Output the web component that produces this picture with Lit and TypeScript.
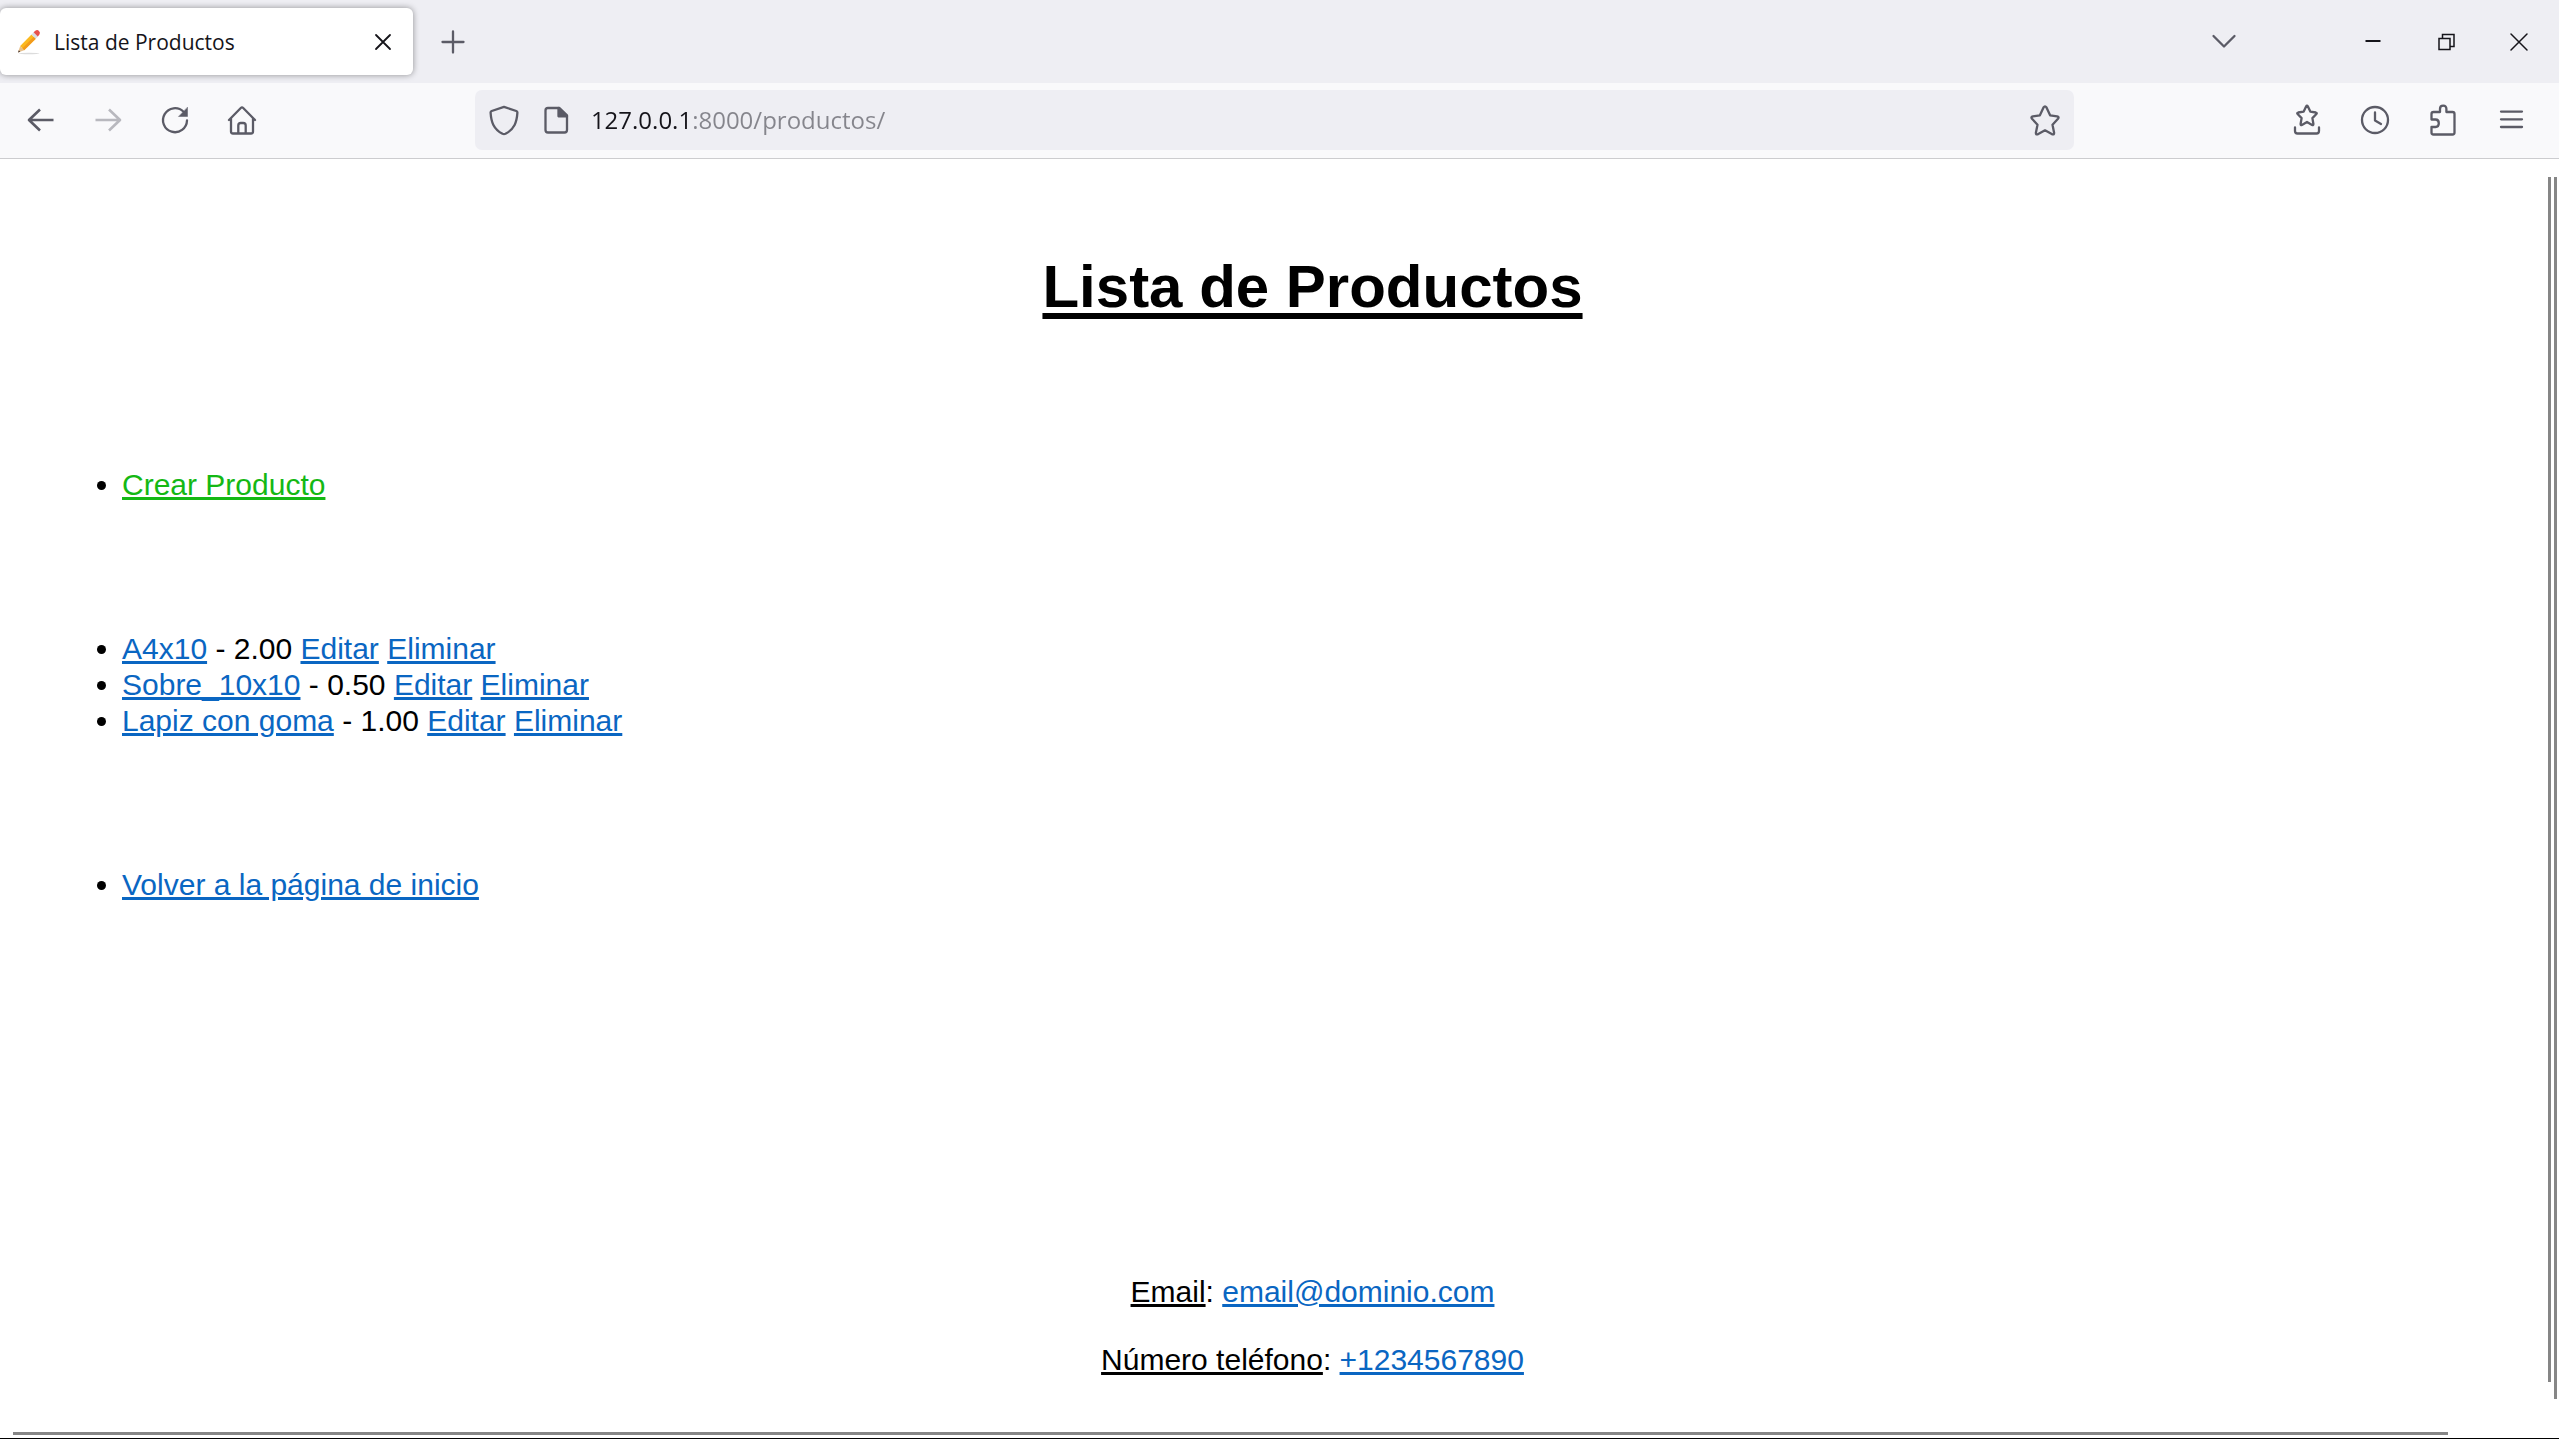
import { LitElement, html, css, svg } from "lit";
import { customElement, property } from "lit/decorators.js";

const glyphs = {
  back: svg`<path d="M28.500 16H4M15 5.500L4 16l11 10.500" stroke-width="2.600" stroke-linecap="butt"/>`,
  forward: svg`<path d="M3.500 16H28M17 5.500L28 16 17 26.500" stroke-width="2.600" stroke-linecap="butt"/>`,
  reload: svg`<path d="M28 16.500a12 12 0 1 1-3.500-8.800"/><path d="M28.500 3.500v9h-8.700z" fill="currentColor" stroke-width="0.500"/>`,
  home: svg`<path d="M3 16L14.800 4q1.200-1.200 2.400 0L29 16M5 14.500v13q0 2 2 2h18q2 0 2-2v-13M12.300 29V21.500q0-2.500 2.500-2.500h2.400q2.500 0 2.500 2.500V29"/>`,
  shield: svg`<path d="M16 2.800L28.300 7q1.200.500 1.100 1.700C28.800 18 26.500 25 17.500 29.800q-1.500.700-3 0C5.500 25 3.200 18 2.600 8.700 2.500 7.500 3 7.300 3.700 7z"/>`,
  page: svg`<path d="M8 4h11.500L27 11.300V26q0 2.500-2.500 2.500H8Q5.500 28.500 5.500 26V6.500Q5.500 4 8 4z"/><path d="M18.500 4v8.300H27z" fill="currentColor"/>`,
  star: svg`<path d="M14.500 3.500q1.500-2.200 3 0l3.600 7.800 7 1.100q2.300.600.900 2.300l-5.500 6 1.600 8q.200 2.300-1.900 1.600L16 26.300l-7.200 4q-2.100.700-1.900-1.600l1.600-8-5.500-6q-1.400-1.700.900-2.300l7-1.100z"/>`,
  bookmarks: svg`<path d="M15.200 2.300q.8-1.500 1.600 0l2.500 5.300 5.500.900q1.600.400.600 1.500l-4 4.100 1 5.900q0 1.500-1.300.900L16 18l-5.100 2.900q-1.300.600-1.300-.900l1-5.900-4-4.100q-1-1.100.600-1.500l5.500-.900zM4 23.500v3.500q0 2.500 2.500 2.500h19q2.500 0 2.500-2.500v-3.500"/>`,
  history: svg`<circle cx="16" cy="16" r="13"/><path d="M16 8.500V16.500l6 3.500"/>`,
  extensions: svg`<path d="M4.500 12V10q0-2 2-2H13V5q0-3.300 3.200-3.300T19.400 5v3H25.500q2 0 2 2v18.500q0 2-2 2h-19q-2 0-2-2V23H8.500q3.300 0 3.300-3.700T8.500 15.500H4.500z"/>`,
  menu: svg`<path d="M6 7.600h21M6 15.300h21M6 23h21"/>`,
  chevron: svg`<path d="M5.500 10L16 20.500 26.500 10"/>`,
  plus: svg`<path d="M16 5.500v21M5.500 16h21"/>`,
  closeTab: svg`<path d="M9 9l14 14M23 9L9 23" stroke-width="1.800"/>`,
  minimize: svg`<path d="M8.500 15h15" stroke-width="2" stroke-linecap="butt"/>`,
  restore: svg`<path d="M9 12.500h11v11H9zM12.500 12V8.500H24v12h-3.500" stroke-width="1.500" stroke-linejoin="miter"/>`,
  closeWindow: svg`<path d="M8 8l16 16M24 8L8 24" stroke-width="1.500"/>`,
};

type GlyphName = keyof typeof glyphs;

@customElement("ui-glyph")
export class UiGlyph extends LitElement {
  @property() name: GlyphName = "menu";

  static styles = css`
    :host { display: block; width: 32px; height: 32px; }
    .glyph {
      display: block;
      width: 32px;
      height: 32px;
      fill: none;
      stroke: currentColor;
      stroke-width: 2.3;
      stroke-linecap: round;
      stroke-linejoin: round;
    }
  `;

  render() {
    return html`<svg class="glyph" viewBox="0 0 32 32" aria-hidden="true">${glyphs[this.name]}</svg>`;
  }
}

@customElement("browser-chrome")
export class BrowserChrome extends LitElement {
  static styles = css`
    :host {
      display: block;
      color: #5b5b66;
      font-family: "Open Sans", "Noto Sans", sans-serif;
    }
    button {
      display: grid;
      place-items: center;
      flex: none;
      margin: 0;
      padding: 0;
      border: 0;
      background: none;
      color: inherit;
    }
    .tabs {
      display: flex;
      align-items: center;
      height: 83px;
      background: #eeeef3;
    }
    .tab {
      display: flex;
      align-items: center;
      box-sizing: border-box;
      width: 413px;
      height: 67px;
      padding: 0 14px 0 17px;
      border-radius: 6px;
      background: #ffffff;
      box-shadow: 0 0 6px rgba(0, 0, 0, 0.4);
      color: #15141a;
    }
    .favicon { flex: none; width: 24px; height: 26px; margin-right: 13px; }
    .title { flex: 1; font-size: 21px; line-height: 32px; white-space: nowrap; }
    .new-tab { width: 56px; height: 56px; margin-left: 12px; }
    .spacer { flex: 1; }
    .list-tabs { width: 56px; height: 56px; margin-right: 84px; }
    .window { display: flex; padding-right: 4px; color: #15141a; }
    .window button { width: 73px; height: 56px; }
    .toolbar {
      display: flex;
      align-items: center;
      height: 74px;
      padding: 0 20px 1px 13px;
      border-bottom: 1px solid #cccccf;
      background: #f9f9fb;
    }
    .group { display: flex; }
    .group button { width: 56px; height: 56px; }
    .group button:disabled { color: #b8b8be; }
    .navigation { gap: 11px; }
    .tools { gap: 12px; }
    .spring { flex: 205 1 0; }
    .address {
      display: flex;
      align-items: center;
      flex: 1600 1 0;
      height: 60px;
      border-radius: 7px;
      background: #eeeef3;
    }
    .address button { width: 32px; height: 56px; }
    .site { margin-left: 13px; margin-right: 7px; }
    .site + .site { margin-right: 19px; }
    .bookmark { margin-right: 13px; }
    .url {
      flex: 1;
      min-width: 0;
      height: 40px;
      padding: 0;
      border: 0;
      outline: 0;
      background: linear-gradient(to right, #15141a 97px, #85858c 97px);
      background-clip: text;
      -webkit-background-clip: text;
      -webkit-text-fill-color: transparent;
      font: 24px/40px "Open Sans", "Noto Sans", sans-serif;
    }
  `;

  private button(name: GlyphName, label: string, className = "", disabled = false) {
    return html`<button class=${className} type="button" aria-label=${label} ?disabled=${disabled}>
      <ui-glyph name=${name}></ui-glyph>
    </button>`;
  }

  render() {
    return html`
      <div class="tabs">
        <div class="tab">
          <svg class="favicon" viewBox="0 0 24 26" aria-hidden="true">
            <ellipse cx="12" cy="24.500" rx="10.500" ry="0.700" fill="#dcdcdc" />
            <path d="M1 23.500L3.200 17l4 4.200z" fill="#e8c08c" />
            <path d="M1 23.500l.8-2.300 1.500 1.500z" fill="#4a3a35" />
            <path d="M3.200 17L14.500 5.500l4.300 4.300L7.200 21.200z" fill="#fbb91f" />
            <path d="M5.400 19.200L16.800 7.700l2 2.100L7.200 21.200z" fill="#f29a1c" />
            <path d="M14.500 5.500L17 3l4.300 4.300-2.500 2.500z" fill="#d9dde2" />
            <path d="M16.600 3.300l1.700-1.600q2-1.500 3.700.2 1.800 1.800.3 3.800l-1.500 1.700z" fill="#e8504a" />
          </svg>
          <span class="title">Lista de Productos</span>
          ${this.button("closeTab", "Cerrar pestaña")}
        </div>
        ${this.button("plus", "Nueva pestaña", "new-tab")}
        <div class="spacer"></div>
        ${this.button("chevron", "Listar pestañas", "list-tabs")}
        <div class="window">
          ${this.button("minimize", "Minimizar")}
          ${this.button("restore", "Restaurar")}
          ${this.button("closeWindow", "Cerrar")}
        </div>
      </div>
      <div class="toolbar">
        <div class="group navigation">
          ${this.button("back", "Atrás")}
          ${this.button("forward", "Adelante", "", true)}
          ${this.button("reload", "Recargar")}
          ${this.button("home", "Inicio")}
        </div>
        <div class="spring"></div>
        <div class="address">
          ${this.button("shield", "Protección", "site")}
          ${this.button("page", "Información del sitio", "site")}
          <input class="url" type="text" aria-label="Dirección" value="127.0.0.1:8000/productos/" />
          ${this.button("star", "Añadir a marcadores", "bookmark")}
        </div>
        <div class="spring"></div>
        <div class="group tools">
          ${this.button("bookmarks", "Marcadores")}
          ${this.button("history", "Historial")}
          ${this.button("extensions", "Extensiones")}
          ${this.button("menu", "Menú")}
        </div>
      </div>
    `;
  }
}

const products = [
  { name: "A4x10", price: "2.00" },
  { name: "Sobre_10x10", price: "0.50" },
  { name: "Lapiz con goma", price: "1.00" },
];

@customElement("product-page")
export class ProductPage extends LitElement {
  static styles = css`
    :host {
      display: flex;
      flex-direction: column;
      box-sizing: border-box;
      padding: 93px 0 54px 80px;
      color: #000000;
      font: 30px/36px "Liberation Sans", Arial, sans-serif;
    }
    .heading {
      margin: 0 0 145px;
      font-size: 60px;
      line-height: 70px;
      text-align: center;
      text-decoration: underline;
      text-decoration-thickness: 6px;
      text-underline-offset: 6px;
      text-decoration-skip-ink: none;
    }
    .list { margin: 0 0 128px; padding: 0 0 0 42px; }
    a { color: #0a66c2; }
    .create { color: #14b814; }
    .contact {
      display: flex;
      flex-direction: column;
      gap: 32px;
      margin-top: auto;
      text-align: center;
    }
    .contact p { margin: 0; }
  `;

  render() {
    return html`
      <h1 class="heading">Lista de Productos</h1>
      <ul class="list"><li><a class="create" href="#crear">Crear Producto</a></li></ul>
      <ul class="list">
        ${products.map(
          (p) => html`<li>
            <a href="#detalle">${p.name}</a> - ${p.price} <a href="#editar">Editar</a> <a href="#eliminar">Eliminar</a>
          </li>`,
        )}
      </ul>
      <ul class="list"><li><a href="#inicio">Volver a la página de inicio</a></li></ul>
      <footer class="contact">
        <p><u>Email</u>: <a href="mailto:email@dominio.com">email@dominio.com</a></p>
        <p><u>Número teléfono</u>: <a href="tel:+1234567890">+1234567890</a></p>
      </footer>
    `;
  }
}

@customElement("app-root")
export class AppRoot extends LitElement {
  static styles = css`
    :host {
      display: flex;
      flex-direction: column;
      box-sizing: border-box;
      min-height: 100vh;
      border-bottom: 1px solid #000000;
      background: #ffffff;
    }
    .view { display: flex; flex: 1; gap: 3px; padding-right: 2px; }
    .page { flex: 1; }
    .bar { background: #868686; }
    .inner { width: 3px; margin: 18px 0 50px; }
    .outer { width: 3px; margin: 18px 0 33px; }
    .bottom { height: 3px; margin: 0 111px 3px 13px; }
  `;

  render() {
    return html`
      <browser-chrome></browser-chrome>
      <div class="view">
        <product-page class="page"></product-page>
        <div class="bar inner"></div>
        <div class="bar outer"></div>
      </div>
      <div class="bar bottom"></div>
    `;
  }
}
